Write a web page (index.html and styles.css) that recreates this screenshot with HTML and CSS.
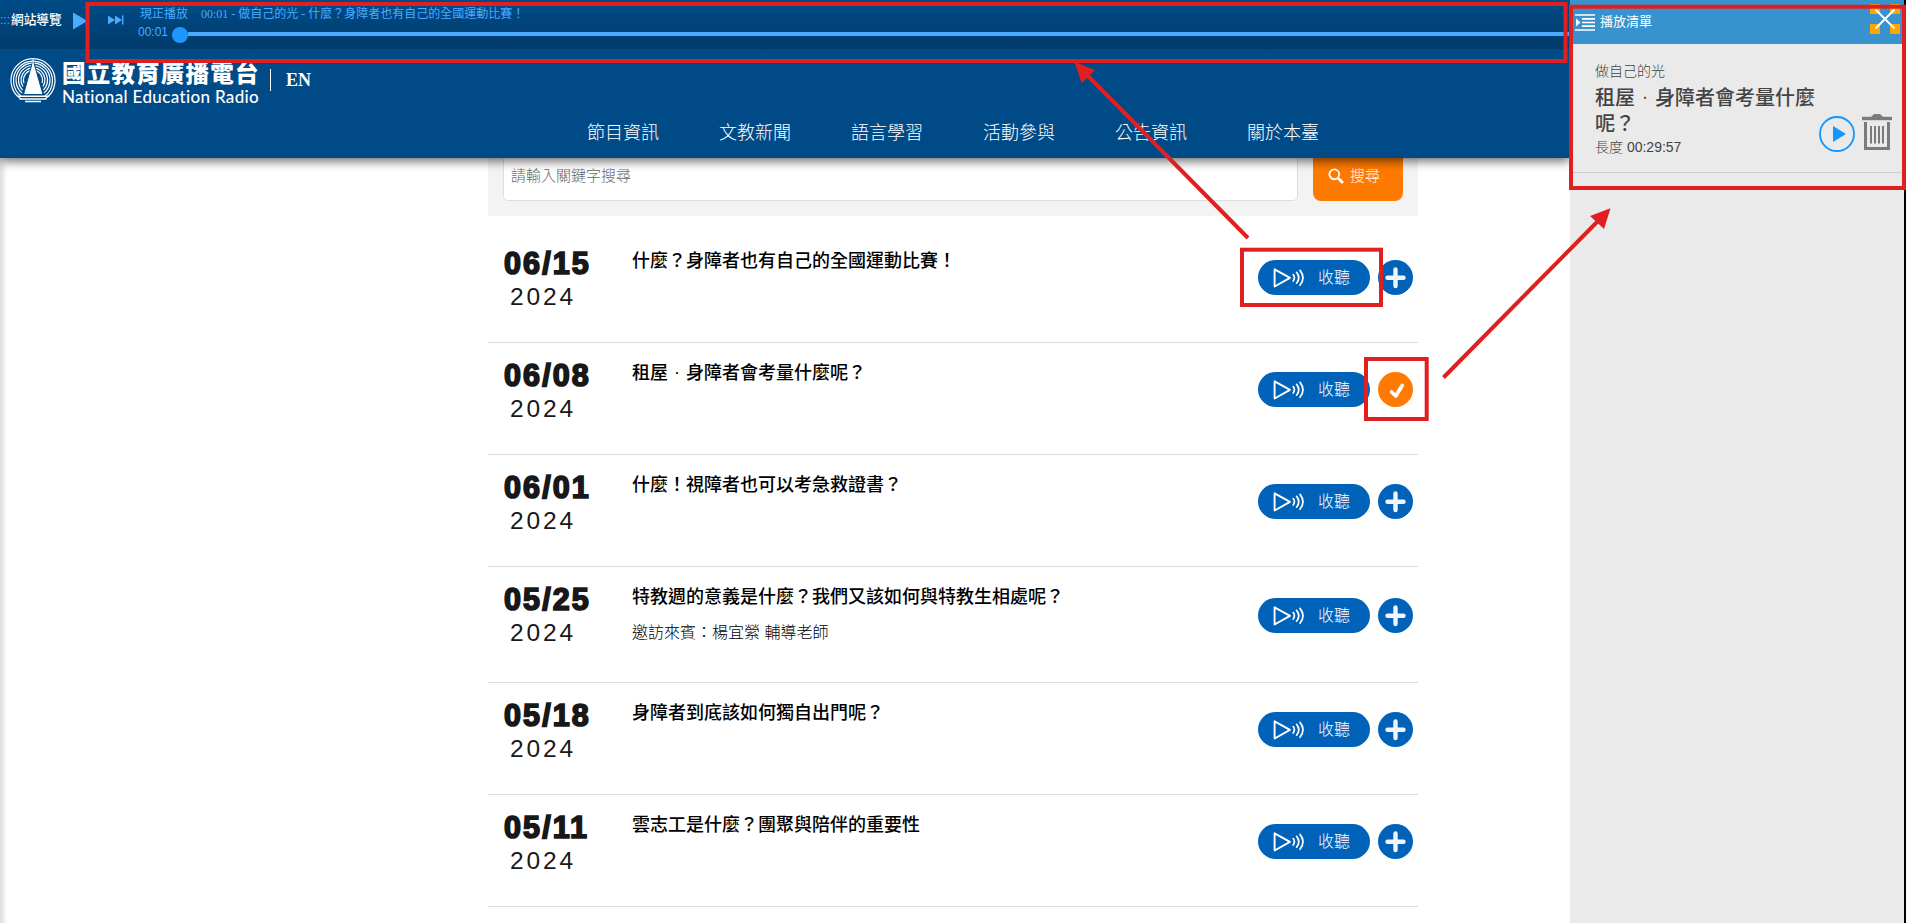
FILE: index.html
```html
<!DOCTYPE html>
<html lang="zh-Hant">
<head>
<meta charset="utf-8">
<title>國立教育廣播電台</title>
<link rel="stylesheet" href="styles.css">
</head>
<body>
<svg class="defs" width="0" height="0">
  <symbol id="listen" viewBox="0 0 32 22">
    <path d="M1.600 2.300v17.200L17 10.800z" fill="none" stroke="#fff" stroke-width="1.900" stroke-linejoin="round"/>
    <path d="M20.200 7.600q2.400 3.200 0 6.400M23.600 5.400q4.400 5.400 0 10.800M27 3.400q6 7.400 0 14.800" fill="none" stroke="#fff" stroke-width="1.700" stroke-linecap="round"/>
  </symbol>
  <symbol id="plus" viewBox="0 0 35 35">
    <circle cx="17.5" cy="17.5" r="17.5" fill="#0062b8"/>
    <path d="M17.5 9.500v16.500M9.500 17.800h16" stroke="#f2f6fc" stroke-width="4.400" stroke-linecap="round"/>
  </symbol>
  <symbol id="check" viewBox="0 0 35 35">
    <circle cx="17.5" cy="17.5" r="17.5" fill="#ff7a00"/>
    <path d="M13.500 20l4.300 4 6.400-10.500" fill="none" stroke="#fff" stroke-width="3.700" stroke-linecap="round" stroke-linejoin="round"/>
  </symbol>
</svg>
<div class="page">
  <div class="site">
    <header class="header">
      <div class="player">
        <span class="dots">:::</span><a class="sitemap">網站導覽</a>
        <svg class="play" width="15" height="18" viewBox="0 0 15 18"><path d="M0 0.500L14.500 9 0 17.500z" fill="#4aabff"/></svg>
        <svg class="next" width="16" height="10" viewBox="0 0 16 10"><path d="M0 .5L7 5 0 9.500zM7 .5L14 5 7 9.500zM14 .5h1.400v9H14z" fill="#4aabff"/></svg>
        <div class="track">
          <div class="now"><span class="label">現正播放</span><span class="song">00:01 - 做自己的光 - 什麼？身障者也有自己的全國運動比賽！</span></div>
          <div class="progress"><span class="time">00:01</span><i class="knob"></i><i class="line"></i></div>
        </div>
      </div>
      <div class="brand">
        <svg class="emblem" width="46" height="46" viewBox="0 0 46 46">
          <g fill="none" stroke="#fff" stroke-width="1.200">
            <path d="M11 42A22 22 0 1 1 35 42"/><path d="M11 39A19.500 19.500 0 1 1 35 39"/><path d="M12 36A17 17 0 1 1 34 36"/><path d="M12.500 33A14.500 14.500 0 1 1 33.500 33"/><path d="M13 29.500A12 12 0 1 1 33 29.500"/><path d="M14 26A9.500 9.500 0 1 1 32 26"/>
          </g>
          <path d="M22.500 5h1.200L33 37.500H13.500z" fill="#fff" stroke="#004b87" stroke-width="1"/>
          <path d="M22.500 1h1v14h-1z" fill="#fff"/>
          <path d="M7 39.200h32M9.500 42h27M15 44.500h16" stroke="#fff" stroke-width="1.500"/>
        </svg>
        <div class="names"><span class="zh">國立教育廣播電台</span><span class="en">National Education Radio</span></div>
        <i class="bar"></i><a class="lang">EN</a>
      </div>
      <nav class="nav"><a>節目資訊</a><a>文教新聞</a><a>語言學習</a><a>活動參與</a><a>公告資訊</a><a>關於本臺</a></nav>
    </header>
    <main class="main">
      <div class="search">
        <div class="field">請輸入關鍵字搜尋</div>
        <div class="submit"><svg width="16" height="16" viewBox="0 0 16 16" fill="none" stroke="#fff"><circle cx="6.300" cy="6.300" r="4.900" stroke-width="1.900"/><path d="M11.300 11.300l2.700 2.700" stroke-width="3" stroke-linecap="round"/></svg>搜尋</div>
      </div>
      <div class="list">
        <div class="row"><div class="date"><b>06/15</b><span>2024</span></div><div class="text"><h3>什麼？身障者也有自己的全國運動比賽！</h3></div><a class="listen"><svg width="32" height="22"><use href="#listen"/></svg>收聽</a><svg class="add" width="35" height="35"><use href="#plus"/></svg></div>
        <div class="row"><div class="date"><b>06/08</b><span>2024</span></div><div class="text"><h3>租屋<i class="dot">‧</i>身障者會考量什麼呢？</h3></div><a class="listen"><svg width="32" height="22"><use href="#listen"/></svg>收聽</a><svg class="add" width="35" height="35"><use href="#check"/></svg></div>
        <div class="row"><div class="date"><b>06/01</b><span>2024</span></div><div class="text"><h3>什麼！視障者也可以考急救證書？</h3></div><a class="listen"><svg width="32" height="22"><use href="#listen"/></svg>收聽</a><svg class="add" width="35" height="35"><use href="#plus"/></svg></div>
        <div class="row tall"><div class="date"><b>05/25</b><span>2024</span></div><div class="text"><h3>特教週的意義是什麼？我們又該如何與特教生相處呢？</h3><p>邀訪來賓：楊宜縈 輔導老師</p></div><a class="listen"><svg width="32" height="22"><use href="#listen"/></svg>收聽</a><svg class="add" width="35" height="35"><use href="#plus"/></svg></div>
        <div class="row"><div class="date"><b>05/18</b><span>2024</span></div><div class="text"><h3>身障者到底該如何獨自出門呢？</h3></div><a class="listen"><svg width="32" height="22"><use href="#listen"/></svg>收聽</a><svg class="add" width="35" height="35"><use href="#plus"/></svg></div>
        <div class="row"><div class="date"><b>05/11</b><span>2024</span></div><div class="text"><h3>雲志工是什麼？團聚與陪伴的重要性</h3></div><a class="listen"><svg width="32" height="22"><use href="#listen"/></svg>收聽</a><svg class="add" width="35" height="35"><use href="#plus"/></svg></div>
      </div>
    </main>
  </div>
  <aside class="queue">
    <div class="queue-head">
      <svg width="20" height="17" viewBox="0 0 20 17"><path d="M0 1h20M7 4.800h13M7 8.500h13M7 12.200h13M0 16h20" stroke="#fff" stroke-width="1.700"/><path d="M1 4.500v8L5.500 8.500z" fill="#fff"/></svg>
      <span>播放清單</span>
      <svg class="close" width="30" height="30" viewBox="0 0 30 30"><path d="M0 0h10v10H0zM20 0h10v10H20zM0 20h10v10H0zM20 20h10v10H20z" fill="#ffa500"/><path d="M5.500 5.500l19 19M24.500 5.500l-19 19" stroke="#fff" stroke-width="1.900"/></svg>
    </div>
    <div class="track-card">
      <div class="info"><p>做自己的光</p><h4>租屋<i class="dot">‧</i>身障者會考量什麼呢？</h4><p>長度 00:29:57</p></div>
      <svg width="36" height="36" viewBox="0 0 36 36"><circle cx="18" cy="18" r="17" fill="none" stroke="#1296ff" stroke-width="1.800"/><path d="M14 10l13 8-13 8z" fill="#1296ff"/></svg>
      <svg class="trash" width="30" height="36" viewBox="0 0 30 36" fill="none" stroke="#7b7b7b"><path d="M0 4.500h30" stroke-width="3.400"/><path d="M9 3l3-3h6l3 3z" fill="#7b7b7b" stroke="none"/><path d="M3.500 8v26.500h23V8" stroke-width="3"/><path d="M9 12v17.500M13 12v17.500M17 12v17.500M21 12v17.500" stroke-width="2"/></svg>
    </div>
  </aside>
  <svg class="notes" width="1906" height="923" viewBox="0 0 1906 923" fill="none" stroke="#e02020" stroke-width="4">
    <rect x="87.500" y="4" width="1478" height="57"/>
    <rect x="1571" y="6.700" width="333" height="181.300"/>
    <rect x="1242" y="249.700" width="139" height="55.300"/>
    <rect x="1366" y="359" width="60.700" height="60"/>
    <path d="M1248 238L1085 73M1443.500 377.500L1600 219"/>
    <path d="M1074.500 62l20.500 8-13.300 13.300zM1610.500 208.300l-20.500 7.700 14 13z" fill="#e02020" stroke="none"/>
  </svg>
</div>
</body>
</html>
```
FILE: styles.css
```css
* { box-sizing: border-box; }
body { margin: 0; font-family: "Liberation Sans", "Noto Sans CJK TC", sans-serif; background: #000; }
svg { display: block; flex: none; }
i { font-style: normal; }
h3, h4, p { margin: 0; }
.defs { position: absolute; }
.page { position: relative; display: flex; width: 1906px; height: 923px; overflow: hidden; }
.site { width: 1570px; height: 923px; overflow: hidden; background: linear-gradient(90deg, #dcdcdc, #fff 7px); }

.header { position: relative; height: 158px; background: #004b87; box-shadow: 0 3px 10px rgba(0,0,0,.6); color: #fff; }
.player { display: flex; height: 49px; padding-top: 3px; background: linear-gradient(#004c88, #003b6b); font-size: 12px; color: #4aabff; }
.dots { width: 11px; line-height: 34px; }
.sitemap { width: 62px; font-size: 12.700px; line-height: 34px; color: #fff; font-weight: 500; white-space: nowrap; }
.play { margin-top: 9px; }
.next { margin: 12px 0 0 20px; }
.track { flex: 1; margin-left: 14px; }
.now { display: flex; gap: 13px; height: 20px; line-height: 22px; padding-left: 2px; white-space: nowrap; }
.now .label { width: 48px; }
.song { font-family: "Liberation Serif", "Noto Sans CJK TC", serif; }
.progress { display: flex; align-items: center; height: 22px; }
.time { width: 34px; line-height: 16px; margin-top: -4px; }
.knob { width: 16px; height: 16px; margin-top: 2px; border-radius: 50%; background: #1e96ff; }
.line { flex: 1; height: 4px; background: #4aabff; }
.brand { display: flex; height: 60px; padding: 8px 0 0 10px; }
.names { display: flex; flex-direction: column; width: 196px; margin-left: 6px; white-space: nowrap; }
.zh { font: 900 23.500px/30px "Noto Sans CJK TC", sans-serif; letter-spacing: 1.200px; height: 30px; }
.en { font: 500 17px/19px Lato, sans-serif; letter-spacing: .35px; }
.bar { width: 1px; height: 22px; margin: 12px 0 0 12px; background: #fff; }
.lang { margin: 12px 0 0 15px; font: bold 18px/22px "Liberation Serif", serif; }
.nav { display: flex; gap: 60px; padding-left: 587px; font-size: 18px; font-weight: 300; line-height: 49px; }

.main { width: 930px; margin-left: 488px; }
.search { display: flex; gap: 15px; height: 58px; padding: 0 15px 15px; background: #f3f3f3; }
.field { width: 795px; padding-left: 7px; border: 1px solid #ddd; border-top: 0; border-radius: 0 0 5px 5px; background: #fff; color: #666; font-size: 15px; font-weight: 300; line-height: 35px; }
.submit { display: flex; width: 90px; height: 43px; padding: 10px 0 0 15px; gap: 6px; border-radius: 0 0 8px 8px; background: #ff7a00; color: #fff; font-size: 15px; font-weight: 300; line-height: 15px; }
.list { padding-top: 15px; }
.row { display: flex; align-items: center; height: 112px; padding: 0 5px 18px 15px; border-bottom: 1px solid #ddd; }
.tall { height: 116px; }
.date { align-self: flex-start; width: 129px; padding-top: 15px; color: #181818; }
.date b { display: block; font-size: 30.500px; font-weight: 700; line-height: 34px; letter-spacing: 2.100px; padding-left: 1px; -webkit-text-stroke: 1.700px #181818; }
.date span { display: block; padding-left: 7px; font-size: 24.500px; line-height: 34px; letter-spacing: 2.900px; }
.text { flex: 1; align-self: flex-start; padding-top: 17px; color: #000; }
.text h3 { font-size: 18px; line-height: 26px; font-weight: 500; }
.text p { margin-top: 11px; font-size: 16px; font-weight: 300; line-height: 24px; color: #000; }
.dot { display: inline-block; width: 2em; font-size: .5em; text-align: center; vertical-align: .35em; line-height: 1; }
.listen { display: flex; align-items: center; width: 112px; height: 35px; padding-left: 15px; gap: 13px; border-radius: 18px; background: #0062b8; color: #fff; font-size: 16px; font-weight: 300; line-height: 35px; }
.add { margin-left: 8px; }

.queue { width: 334px; background: #eaeaea; color: #444; }
.queue-head { display: flex; height: 44px; padding: 14px 4px 0 5px; background: #3892cd; color: #fff; font-size: 13px; line-height: 16px; }
.queue-head span { margin-left: 5px; }
.close { margin: -10px 0 0 auto; }
.track-card { display: flex; height: 129px; padding: 17px 12px 0 25px; border-bottom: 1px solid #ccc; }
.track-card > svg { margin-top: 55px; }
.track-card > .trash { margin: 53px 0 0 7px; }
.info { width: 224px; }
.info p { font-size: 14px; font-weight: 300; line-height: 20px; }
.info h4 { margin-top: 4px; font-size: 20px; line-height: 26px; font-weight: 500; color: #444; }
.notes { position: absolute; left: 0; top: 0; }
```
